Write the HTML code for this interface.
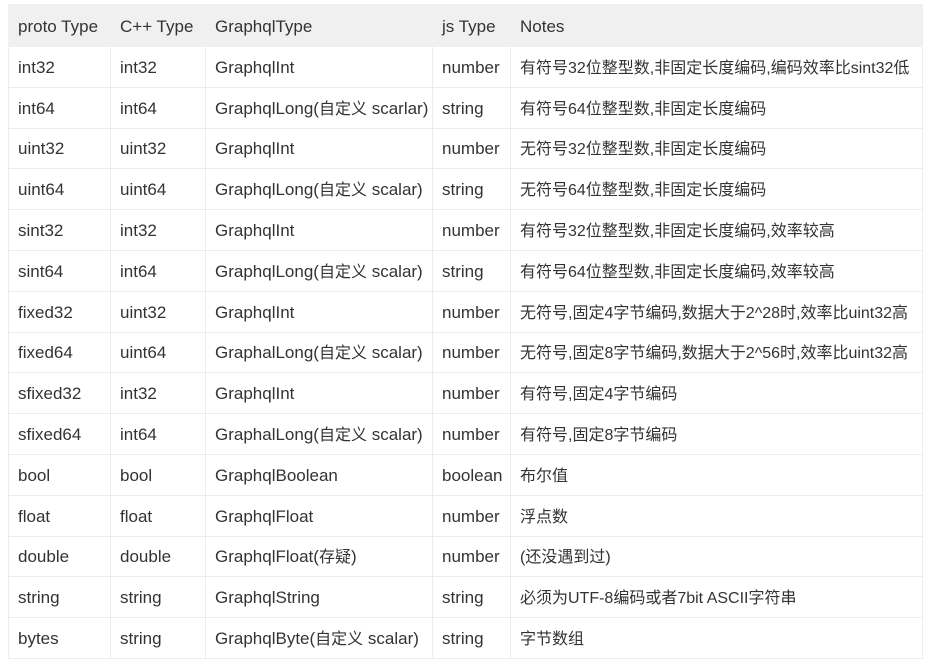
<!DOCTYPE html>
<html><head><meta charset="utf-8"><style>
body{margin:0;background:#fff;}
table{position:absolute;left:8px;top:4px;border-collapse:collapse;table-layout:fixed;width:914px;font-family:"Liberation Sans","Noto Sans CJK SC",sans-serif;font-size:16px;color:#333;}
td,th{border:1px solid #ececec;padding:2px 9px 0;height:37.8px;line-height:20px;text-align:left;font-weight:normal;white-space:nowrap;overflow:hidden;vertical-align:middle;}
td:not(:last-child),th{font-size:17px;}
td span,th span{display:inline-block;height:20px;line-height:20px;vertical-align:top;}
td:last-child span{position:relative;top:1px;}
td span.c{font-size:16px;position:relative;top:1px;}
th{background:#f0f0f0;height:39px;border-color:#f0f0f0;}
</style></head><body>
<table>
<colgroup><col style="width:102px"><col style="width:95px"><col style="width:227px"><col style="width:78px"><col style="width:412px"></colgroup>
<tr><th>proto Type</th><th>C++ Type</th><th>GraphqlType</th><th>js Type</th><th>Notes</th></tr>
<tr><td>int32</td><td>int32</td><td>GraphqlInt</td><td>number</td><td><span>有符号32位整型数,非固定长度编码,编码效率比sint32低</span></td></tr>
<tr><td>int64</td><td>int64</td><td><span>GraphqlLong(<span class="c">自定义</span> scarlar)</span></td><td>string</td><td><span>有符号64位整型数,非固定长度编码</span></td></tr>
<tr><td>uint32</td><td>uint32</td><td>GraphqlInt</td><td>number</td><td><span>无符号32位整型数,非固定长度编码</span></td></tr>
<tr><td>uint64</td><td>uint64</td><td><span>GraphqlLong(<span class="c">自定义</span> scalar)</span></td><td>string</td><td><span>无符号64位整型数,非固定长度编码</span></td></tr>
<tr><td>sint32</td><td>int32</td><td>GraphqlInt</td><td>number</td><td><span>有符号32位整型数,非固定长度编码,效率较高</span></td></tr>
<tr><td>sint64</td><td>int64</td><td><span>GraphqlLong(<span class="c">自定义</span> scalar)</span></td><td>string</td><td><span>有符号64位整型数,非固定长度编码,效率较高</span></td></tr>
<tr><td>fixed32</td><td>uint32</td><td>GraphqlInt</td><td>number</td><td><span>无符号,固定4字节编码,数据大于2^28时,效率比uint32高</span></td></tr>
<tr><td>fixed64</td><td>uint64</td><td><span>GraphalLong(<span class="c">自定义</span> scalar)</span></td><td>number</td><td><span>无符号,固定8字节编码,数据大于2^56时,效率比uint32高</span></td></tr>
<tr><td>sfixed32</td><td>int32</td><td>GraphqlInt</td><td>number</td><td><span>有符号,固定4字节编码</span></td></tr>
<tr><td>sfixed64</td><td>int64</td><td><span>GraphalLong(<span class="c">自定义</span> scalar)</span></td><td>number</td><td><span>有符号,固定8字节编码</span></td></tr>
<tr><td>bool</td><td>bool</td><td>GraphqlBoolean</td><td>boolean</td><td><span>布尔值</span></td></tr>
<tr><td>float</td><td>float</td><td>GraphqlFloat</td><td>number</td><td><span>浮点数</span></td></tr>
<tr><td>double</td><td>double</td><td><span>GraphqlFloat(<span class="c">存疑</span>)</span></td><td>number</td><td><span>(还没遇到过)</span></td></tr>
<tr><td>string</td><td>string</td><td>GraphqlString</td><td>string</td><td><span>必须为UTF-8编码或者7bit ASCII字符串</span></td></tr>
<tr><td>bytes</td><td>string</td><td><span>GraphqlByte(<span class="c">自定义</span> scalar)</span></td><td>string</td><td><span>字节数组</span></td></tr>
</table>
</body></html>
